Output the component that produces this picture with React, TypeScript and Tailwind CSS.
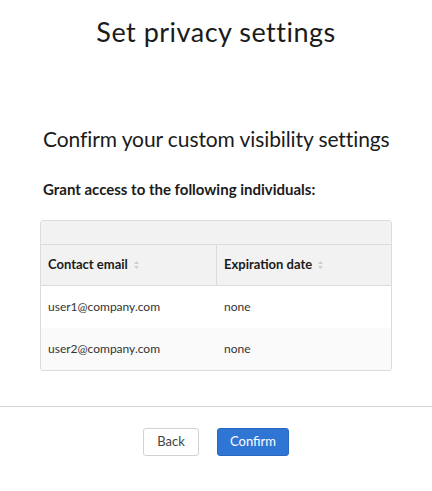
import React from "react";

const rows = [
    { email: "user1@company.com", expires: "none" },
    { email: "user2@company.com", expires: "none" },
];

function SortIcon() {
    return (
        <svg className="ml-[6px] inline-block h-[8px] w-[5px]" viewBox="0 0 5 8" fill="#cfcfcf">
            <path d="M2.5 0L5 3H0z" />
            <path d="M2.5 8L0 5H5z" />
        </svg>
    );
}

export default function App() {
    return (
        <div
            className="flex h-[491px] w-[432px] flex-col bg-white text-[#1b1b1b]"
            style={{ fontFamily: "Lato, 'Noto Sans', sans-serif" }}
        >
            {/* Title */}
            <h1 className="pt-[16px] text-center text-[27px] leading-[32px] font-normal tracking-[0.5px]">
                Set privacy settings
            </h1>

            <div className="px-10 pt-[78px]">
                <h2 className="px-[3px] text-[21px] leading-[26px] font-normal tracking-[-0.1px] whitespace-nowrap">
                    Confirm your custom visibility settings
                </h2>
                <p className="mt-[28px] px-[3px] text-[15px] leading-[18px] font-bold">
                    Grant access to the following individuals:
                </p>

                {/* Table */}
                <div className="mt-[22px] overflow-hidden rounded-[3px] border border-[#dcdcdc]">
                    <div className="h-[24px] border-b border-[#dcdcdc] bg-[#f2f2f2]" />
                    <div className="flex h-[41px] border-b border-[#dcdcdc] bg-[#f2f2f2] text-[13px] font-bold">
                        <div className="flex w-[176px] items-center border-r border-[#dcdcdc] pl-[7px]">
                            Contact email <SortIcon />
                        </div>
                        <div className="flex flex-1 items-center pl-[7px]">
                            Expiration date <SortIcon />
                        </div>
                    </div>
                    {rows.map((r, i) => (
                        <div
                            key={r.email}
                            className={`flex h-[42px] items-center text-[12px] text-[#333] ${i % 2 === 1 ? "bg-[#fafafa]" : "bg-white"}`}
                        >
                            <div className="w-[176px] pl-[7px]">{r.email}</div>
                            <div className="flex-1 pl-[7px]">{r.expires}</div>
                        </div>
                    ))}
                </div>
            </div>

            {/* Footer */}
            <div className="mt-[35px] border-t border-[#d6d6d6]">
                <div className="flex justify-center gap-[18px] pt-[21px]">
                    <button className="h-[28px] w-[56px] rounded-[3px] border border-[#d2d2d2] bg-white text-[13px] text-[#444]">
                        Back
                    </button>
                    <button className="h-[28px] w-[72px] rounded-[3px] border border-[#2a68c0] bg-[#2f75d3] text-[13px] text-white">
                        Confirm
                    </button>
                </div>
            </div>
        </div>
    );
}
